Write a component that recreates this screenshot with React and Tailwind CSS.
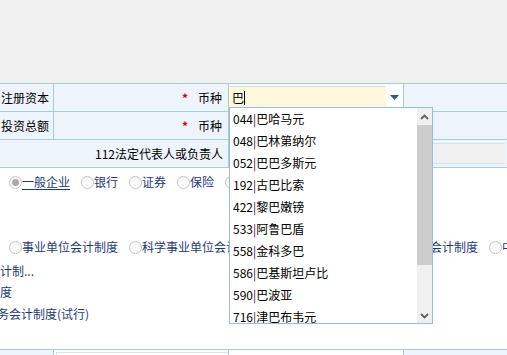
import React from "react";

const items = [
  ["044", "巴哈马元"],
  ["048", "巴林第纳尔"],
  ["052", "巴巴多斯元"],
  ["192", "古巴比索"],
  ["422", "黎巴嫩镑"],
  ["533", "阿鲁巴盾"],
  ["558", "金科多巴"],
  ["586", "巴基斯坦卢比"],
  ["590", "巴波亚"],
  ["716", "津巴布韦元"],
];

function Radio({ checked }) {
  return (
    <span className="w-[13px] h-[13px] shrink-0 rounded-full border border-[#c4c4c4] bg-gradient-to-b from-[#f4f4f4] to-white flex items-center justify-center">
      {checked && <span className="w-[7px] h-[7px] rounded-full bg-[#a9a9a9]" />}
    </span>
  );
}

function Opt({ checked, label, underline, className = "" }) {
  return (
    <div className={"flex items-center shrink-0 " + className}>
      <Radio checked={checked} />
      <span className={"whitespace-nowrap " + (underline ? "underline underline-offset-2" : "")}>{label}</span>
    </div>
  );
}

function Chevron({ up }) {
  return (
    <svg width="9" height="6" viewBox="0 0 9 6">
      <polyline
        points={up ? "1,5 4.5,1.5 8,5" : "1,1 4.5,4.5 8,1"}
        fill="none"
        stroke="#606060"
        strokeWidth="1.8"
      />
    </svg>
  );
}

export default function App() {
  return (
    <div className="w-[507px] h-[355px] relative overflow-hidden bg-white font-['Noto_Sans_CJK_SC','Microsoft_YaHei',sans-serif] text-[12px] leading-[16px] text-black">
      <div className="h-[83px] bg-[#f0f0f0]" />

      {/* Row 1 */}
      <div className="flex h-[28px] border-t border-[#a8cdd0]">
        <div className="w-[54px] border-r border-[#a8cdd0] bg-[#edf4fc] flex items-center justify-end pr-[4px] whitespace-nowrap overflow-hidden">注册资本</div>
        <div className="w-[175px] border-r border-[#a8cdd0] bg-[#edf4fc] flex items-center justify-end pr-[6px] gap-[10px]">
          <span className="text-[#e00000] font-bold">*</span>
          <span>币种</span>
        </div>
        <div className="w-[175px] border-r border-[#a8cdd0] bg-white flex items-start">
          <div className="mt-[2px] w-[157px] h-[23px] border-t border-[#dedede] bg-[#fef9dc] flex items-center pl-[3px]">
            <span>巴</span>
            <span className="w-[1px] h-[14px] bg-black" />
          </div>
          <div className="flex-1 flex items-center justify-center h-full">
            <svg width="9" height="5" viewBox="0 0 9 5">
              <polygon points="0,0 9,0 4.5,5" fill="#35568c" />
            </svg>
          </div>
        </div>
        <div className="flex-1 bg-[#edf4fc]" />
      </div>

      {/* Row 2 */}
      <div className="flex h-[28px] border-t border-[#a8cdd0]">
        <div className="w-[54px] border-r border-[#a8cdd0] bg-[#edf4fc] flex items-center justify-end pr-[4px] whitespace-nowrap overflow-hidden">投资总额</div>
        <div className="w-[175px] border-r border-[#a8cdd0] bg-[#edf4fc] flex items-center justify-end pr-[6px] gap-[10px]">
          <span className="text-[#e00000] font-bold">*</span>
          <span>币种</span>
        </div>
        <div className="w-[175px] border-r border-[#a8cdd0] bg-white" />
        <div className="flex-1 bg-[#edf4fc]" />
      </div>

      {/* Row 3 */}
      <div className="flex h-[28px] border-t border-[#a8cdd0] bg-[#edf4fc]">
        <div className="w-[229px] border-r border-[#a8cdd0] flex items-center justify-end pr-[5px] whitespace-nowrap">112法定代表人或负责人</div>
        <div className="flex-1 pl-[2px] pr-[2px] pt-[3px]">
          <div className="h-[21px] bg-[#f0f0f0] border-t border-b border-[#d6e2ea]" />
        </div>
      </div>

      {/* White area */}
      <div className="h-[182px] border-t border-[#a8cdd0] text-[#1c3a78] overflow-hidden">
        <div className="h-[28px] flex items-center pl-[9px] gap-[11px] whitespace-nowrap">
          <Opt checked label="一般企业" underline />
          <Opt label="银行" />
          <Opt label="证券" />
          <Opt label="保险" />
          <Opt label="其他金融机构" />
        </div>
        <div className="h-[28px] mt-[37px] flex items-center pl-[9px] gap-[11px] whitespace-nowrap">
          <Opt label="事业单位会计制度" />
          <Opt label="科学事业单位会计制度" />
          <Opt label="民间非营利组织会计制度" className="ml-[60px]" />
          <Opt label="中小学校会计制度" />
        </div>
        <div className="h-[20px] flex items-center whitespace-nowrap">计制...</div>
        <div className="h-[22px] flex items-center whitespace-nowrap">度</div>
        <div className="h-[22px] flex items-center whitespace-nowrap ml-[-3px]">务会计制度(试行)</div>
      </div>

      {/* Bottom row */}
      <div className="flex h-[10px] border-t border-[#a8cdd0]">
        <div className="w-[54px] border-r border-[#a8cdd0] bg-[#edf4fc]" />
        <div className="w-[175px] border-r border-[#a8cdd0] bg-white pl-[2px] pt-[2px]">
          <div className="h-full border-t border-l border-[#d6e2ea]" />
        </div>
        <div className="w-[175px] border-r border-[#a8cdd0] bg-white" />
        <div className="flex-1 bg-[#edf4fc]" />
      </div>

      {/* Dropdown list */}
      <div className="absolute left-[229px] top-[107px] w-[204px] h-[217px] border border-[#99bbe8] bg-white flex overflow-hidden">
        <div className="flex-1 overflow-hidden">
          {items.map(([code, name]) => (
            <div key={code} className="h-[22px] flex items-center pl-[3px] whitespace-nowrap">
              <span>{code}</span>
              <span className="text-[#4a0a42]">|</span>
              <span>{name}</span>
            </div>
          ))}
        </div>
        <div className="w-[15px] flex flex-col bg-[#f0f0f0]">
          <div className="h-[17px] flex items-center justify-center">
            <Chevron up />
          </div>
          <div className="h-[140px] bg-[#cdcdcd]" />
          <div className="flex-1 flex items-end justify-center pb-[4px]">
            <Chevron />
          </div>
        </div>
      </div>
    </div>
  );
}
